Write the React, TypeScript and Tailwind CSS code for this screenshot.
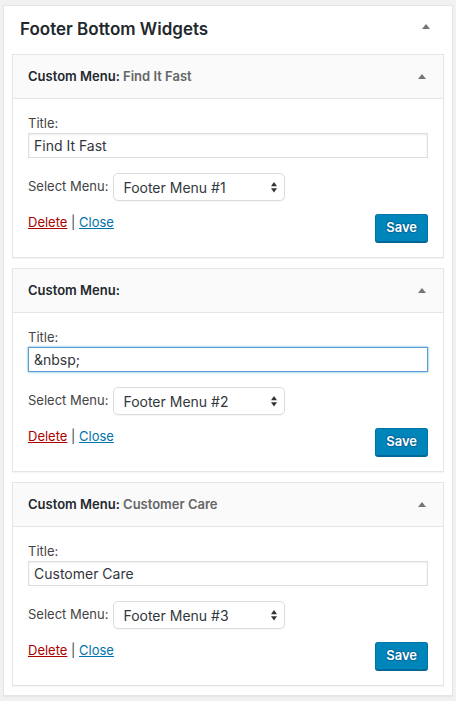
import React from "react";

function UpArrow({ className }: { className?: string }) {
  return (
    <svg width="8" height="5" viewBox="0 0 8 5" className={className}>
      <path d="M0 5 L4 0 L8 5 Z" fill="#72777c" />
    </svg>
  );
}

function SelectBox({ value }: { value: string }) {
  return (
    <div className="relative flex h-[28px] w-[172px] items-center rounded-[5px] border border-[#dcdcdc] bg-white pl-[9px] text-[14px] text-[#32373c] shadow-[0_1px_1px_rgba(0,0,0,0.04)]">
      <span>{value}</span>
      <svg
        width="6"
        height="11"
        viewBox="0 0 6 11"
        className="absolute right-[7px] top-[8px]"
      >
        <path d="M0 4.2 L3 0 L6 4.2 Z" fill="#333" />
        <path d="M0 6.3 L3 10.5 L6 6.3 Z" fill="#333" />
      </svg>
    </div>
  );
}

function Widget({
  suffix,
  title,
  menu,
  focused,
}: {
  suffix?: string;
  title: string;
  menu: string;
  focused?: boolean;
}) {
  return (
    <div className="border border-[#e5e5e5] bg-white shadow-[0_1px_1px_rgba(0,0,0,0.04)]">
      <div className="flex h-[44px] items-center justify-between border-b border-[#e5e5e5] bg-[#fafafa] pl-[15px] pr-[17px]">
        <div className="text-[13px] font-semibold text-[#23282d]">
          Custom Menu:{suffix ? <span className="text-[#666]"> {suffix}</span> : null}
        </div>
        <UpArrow />
      </div>
      <div className="px-[15px] pb-[15px] pt-[16px]">
        <div className="text-[13px] leading-[16px] text-[#444]">Title:</div>
        <div
          className={
            focused
              ? "mt-[2px] flex h-[25px] items-center border border-[#5b9dd9] bg-white px-[5px] text-[14px] text-[#32373c] shadow-[0_0_2px_rgba(30,140,190,0.8)]"
              : "mt-[2px] flex h-[25px] items-center border border-[#ddd] bg-white px-[5px] text-[14px] text-[#32373c] shadow-[inset_0_1px_2px_rgba(0,0,0,0.07)]"
          }
        >
          {title}
        </div>
        <div className="mt-[15px] flex items-center gap-[5px]">
          <span className="text-[13px] text-[#444]">Select Menu:</span>
          <SelectBox value={menu} />
        </div>
        <div className="mt-[13px] flex items-start justify-between">
          <div className="text-[13px] leading-[16px] text-[#444]">
            <a className="text-[#a00] underline">Delete</a>
            <span> | </span>
            <a className="text-[#0073aa] underline">Close</a>
          </div>
          <button className="h-[28px] rounded-[3px] border border-[#0073aa] border-b-[#006799] bg-[#0085ba] px-[10px] text-[13px] font-semibold text-white shadow-[0_1px_0_#006799] [text-shadow:0_-1px_1px_#006799,1px_0_1px_#006799,0_1px_1px_#006799,-1px_0_1px_#006799]">
            Save
          </button>
        </div>
      </div>
    </div>
  );
}

export default function App() {
  return (
    <div
      className="min-h-[701px] w-[456px] bg-[#f1f1f1] pl-[3px] pt-[5px]"
      style={{ fontFamily: "Inter, 'Liberation Sans', sans-serif" }}
    >
      <div className="w-[450px] border border-[#e5e5e5] bg-white px-[8px] pb-[9px] shadow-[0_1px_1px_rgba(0,0,0,0.04)]">
        <div className="flex h-[48px] items-center justify-between pl-[8px] pr-[14px]">
          <h2 className="text-[17px] font-semibold text-[#23282d]">Footer Bottom Widgets</h2>
          <UpArrow className="mb-[8px]" />
        </div>
        <div className="flex flex-col gap-[10px]">
          <Widget suffix="Find It Fast" title="Find It Fast" menu="Footer Menu #1" />
          <Widget title={"&nbsp;"} menu="Footer Menu #2" focused />
          <Widget suffix="Customer Care" title="Customer Care" menu="Footer Menu #3" />
        </div>
      </div>
    </div>
  );
}
